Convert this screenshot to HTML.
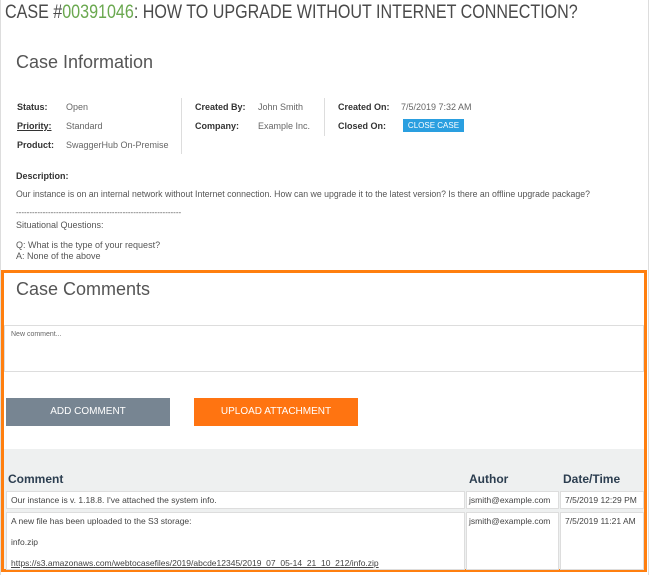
<!DOCTYPE html>
<html><head><style>
*{margin:0;padding:0;box-sizing:border-box}
body{width:650px;height:575px;background:#fff;font-family:"Liberation Sans",sans-serif;position:relative;overflow:hidden;color:#555}
.a{position:absolute;white-space:nowrap}
.lb{font-size:9px;font-weight:bold;color:#333}
.v{font-size:9px;color:#666}
.t{font-size:9px;color:#555}
</style></head><body>
<div class="a" style="left:0;top:0;width:1px;height:575px;background:#ddd"></div>
<div class="a" style="left:648px;top:0;width:1px;height:575px;background:#ddd"></div>
<div class="a" style="left:5px;top:1px;font-size:19.5px;color:#4a4a4a;transform:scaleX(0.825);transform-origin:0 0">CASE #<span style="color:#6aa84f">00391046</span>: HOW TO UPGRADE WITHOUT INTERNET CONNECTION?</div>
<div class="a" style="left:16px;top:52px;font-size:18px;color:#555">Case Information</div>
<div class="a lb" style="left:17px;top:102px">Status:</div><div class="a v" style="left:66px;top:102px">Open</div>
<div class="a lb" style="left:17px;top:121px;text-decoration:underline">Priority:</div><div class="a v" style="left:66px;top:121px">Standard</div>
<div class="a lb" style="left:17px;top:140px">Product:</div><div class="a v" style="left:66px;top:140px">SwaggerHub On-Premise</div>
<div class="a" style="left:181px;top:98px;width:1px;height:56px;background:#ddd"></div>
<div class="a lb" style="left:195px;top:102px">Created By:</div><div class="a v" style="left:258px;top:102px">John Smith</div>
<div class="a lb" style="left:195px;top:121px">Company:</div><div class="a v" style="left:258px;top:121px">Example Inc.</div>
<div class="a" style="left:324px;top:98px;width:1px;height:38px;background:#ddd"></div>
<div class="a lb" style="left:338px;top:102px">Created On:</div><div class="a v" style="left:401px;top:102px">7/5/2019 7:32 AM</div>
<div class="a lb" style="left:338px;top:121px">Closed On:</div>
<div class="a" style="left:403px;top:119px;width:61px;height:13px;background:#2a9fe0;color:#fff;font-size:8px;text-align:center;line-height:13px">CLOSE CASE</div>
<div class="a lb" style="left:16px;top:171px">Description:</div>
<div class="a t" style="left:16px;top:189px;transform:scaleX(0.97);transform-origin:0 0">Our instance is on an internal network without Internet connection. How can we upgrade it to the latest version? Is there an offline upgrade package?</div>
<div class="a t" style="left:16px;top:208px;font-size:8px">--------------------------------------------------------------</div>
<div class="a t" style="left:16px;top:220px">Situational Questions:</div>
<div class="a t" style="left:16px;top:240px">Q: What is the type of your request?</div>
<div class="a t" style="left:16px;top:251px">A: None of the above</div>

<div class="a" style="left:1px;top:270px;width:646px;height:302px;border:3px solid #ff7f0f"></div>
<div class="a" style="left:16px;top:279px;font-size:18px;color:#555">Case Comments</div>
<div class="a" style="left:4px;top:325px;width:640px;height:47px;border:1px solid #ddd"></div>
<div class="a" style="left:11px;top:331px;font-size:7px;color:#666">New comment...</div>
<div class="a" style="left:6px;top:398px;width:164px;height:28px;background:#778592;color:#fff;font-size:10px;text-align:center;line-height:28px">ADD COMMENT</div>
<div class="a" style="left:194px;top:398px;width:164px;height:28px;background:#ff7411;color:#fff;font-size:10px;text-align:center;line-height:28px">UPLOAD ATTACHMENT</div>
<div class="a" style="left:4px;top:449px;width:640px;height:120px;background:#eef0f0"></div>
<div class="a" style="left:8px;top:472px;font-size:12px;font-weight:bold;color:#2c3e50">Comment</div>
<div class="a" style="left:469px;top:472px;font-size:12px;font-weight:bold;color:#2c3e50">Author</div>
<div class="a" style="left:563px;top:472px;font-size:12px;font-weight:bold;color:#2c3e50">Date/Time</div>
<div class="a" style="left:6px;top:491px;width:459px;height:18px;background:#fff;border:1px solid #ddd"></div>
<div class="a" style="left:466px;top:491px;width:93px;height:18px;background:#fff;border:1px solid #ddd"></div>
<div class="a" style="left:560px;top:491px;width:84px;height:18px;background:#fff;border:1px solid #ddd"></div>
<div class="a" style="left:6px;top:512px;width:459px;height:58px;background:#fff;border:1px solid #ddd"></div>
<div class="a" style="left:466px;top:512px;width:93px;height:58px;background:#fff;border:1px solid #ddd"></div>
<div class="a" style="left:560px;top:512px;width:84px;height:58px;background:#fff;border:1px solid #ddd"></div>
<div class="a" style="left:11px;top:495px;font-size:8.5px;color:#444">Our instance is v. 1.18.8. I've attached the system info.</div>
<div class="a" style="left:469px;top:495px;font-size:8.5px;color:#444">jsmith@example.com</div>
<div class="a" style="left:565px;top:495px;font-size:8.5px;color:#444">7/5/2019 12:29 PM</div>
<div class="a" style="left:11px;top:516px;font-size:8.5px;color:#444">A new file has been uploaded to the S3 storage:</div>
<div class="a" style="left:469px;top:516px;font-size:8.5px;color:#444">jsmith@example.com</div>
<div class="a" style="left:565px;top:516px;font-size:8.5px;color:#444">7/5/2019 11:21 AM</div>
<div class="a" style="left:11px;top:537px;font-size:8.5px;color:#444">info.zip</div>
<div class="a" style="left:11px;top:558px;font-size:8.5px;color:#444;text-decoration:underline">https://s3.amazonaws.com/webtocasefiles/2019/abcde12345/2019_07_05-14_21_10_212/info.zip</div>
</body></html>
